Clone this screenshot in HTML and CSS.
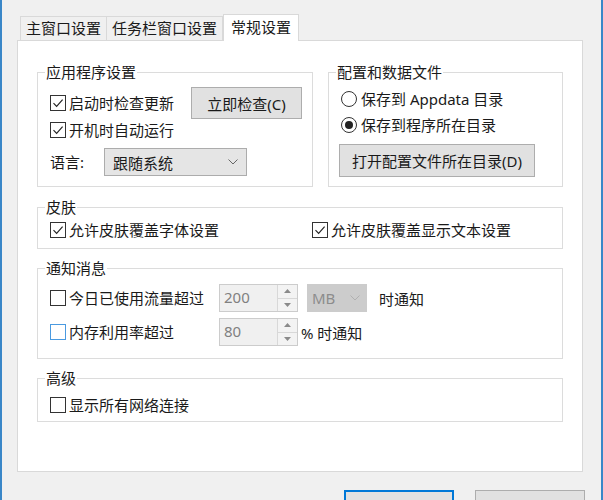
FILE: index.html
```html
<!DOCTYPE html>
<html lang="zh">
<head>
<meta charset="utf-8">
<title>常规设置</title>
<link rel="stylesheet" href="styles.css">
</head>
<body>
<div class="window">
  <div class="tabs">
    <div class="tab">主窗口设置</div>
    <div class="tab">任务栏窗口设置</div>
    <div class="tab active">常规设置</div>
  </div>
  <div class="pane">
    <div class="top-row">
      <fieldset class="group app">
        <legend>应用程序设置</legend>
        <div class="body app-body">
          <label class="chk"><span class="box"><svg viewBox="0 0 14 14"><path d="M2.5 7.2 L5.6 10.3 L11.6 3.6"/></svg></span>启动时检查更新</label>
          <button class="btn check-btn">立即检查(C)</button>
          <label class="chk row2"><span class="box"><svg viewBox="0 0 14 14"><path d="M2.5 7.2 L5.6 10.3 L11.6 3.6"/></svg></span>开机时自动运行</label>
          <span class="lang-label">语言:</span>
          <div class="select lang-select"><span>跟随系统</span><svg class="chev" viewBox="0 0 10 6"><path d="M0.5 0.5 L5 5 L9.5 0.5"/></svg></div>
        </div>
      </fieldset>
      <fieldset class="group cfg">
        <legend>配置和数据文件</legend>
        <div class="body cfg-body">
          <label class="radio"><span class="circle"></span>保存到 Appdata 目录</label>
          <label class="radio"><span class="circle on"><span class="dot"></span></span>保存到程序所在目录</label>
          <button class="btn open-btn">打开配置文件所在目录(D)</button>
        </div>
      </fieldset>
    </div>

    <fieldset class="group skin">
      <legend>皮肤</legend>
      <div class="body skin-body">
        <label class="chk"><span class="box"><svg viewBox="0 0 14 14"><path d="M2.5 7.2 L5.6 10.3 L11.6 3.6"/></svg></span>允许皮肤覆盖字体设置</label>
        <label class="chk"><span class="box"><svg viewBox="0 0 14 14"><path d="M2.5 7.2 L5.6 10.3 L11.6 3.6"/></svg></span>允许皮肤覆盖显示文本设置</label>
      </div>
    </fieldset>

    <fieldset class="group notify">
      <legend>通知消息</legend>
      <div class="body notify-body">
        <label class="chk"><span class="box"></span>今日已使用流量超过</label>
        <div class="spin"><span class="spin-val">200</span><span class="spin-btns"><span class="sb"><svg viewBox="0 0 7 4"><path d="M0 4 L3.5 0 L7 4Z"/></svg></span><span class="sb"><svg viewBox="0 0 7 4"><path d="M0 0 L3.5 4 L7 0Z"/></svg></span></span></div>
        <div class="tail"><div class="select unit"><span>MB</span><svg class="chev" viewBox="0 0 10 6"><path d="M0.5 0.5 L5 5 L9.5 0.5"/></svg></div><span class="when">时通知</span></div>
        <label class="chk"><span class="box hover"></span>内存利用率超过</label>
        <div class="spin"><span class="spin-val">80</span><span class="spin-btns"><span class="sb"><svg viewBox="0 0 7 4"><path d="M0 4 L3.5 0 L7 4Z"/></svg></span><span class="sb"><svg viewBox="0 0 7 4"><path d="M0 0 L3.5 4 L7 0Z"/></svg></span></span></div>
        <div class="tail"><span class="pct">% 时通知</span></div>
      </div>
    </fieldset>

    <fieldset class="group adv">
      <legend>高级</legend>
      <div class="body adv-body">
        <label class="chk"><span class="box"></span>显示所有网络连接</label>
      </div>
    </fieldset>
  </div>
  <div class="footer">
    <button class="btn ok">确定</button>
    <button class="btn cancel">取消</button>
  </div>
</div>
</body>
</html>
```

FILE: styles.css
```css
* { box-sizing: border-box; }
html, body { margin: 0; padding: 0; }
body {
  background: #f0f0f0;
  font-family: "Segoe UI", "Noto Sans", "Noto Sans CJK SC", sans-serif;
  font-size: 15px;
  color: #1a1a1a;
}
.window {
  height: 500px;
  overflow: hidden;
  border-left: 2px solid #3a87c8;
  border-right: 2px solid #3a87c8;
  padding: 14px 18px 0 15px;
  display: flex;
  flex-direction: column;
}
.tabs {
  display: flex;
  align-items: flex-end;
  height: 26px;
  padding-left: 3px;
}
.tab {
  height: 24px;
  line-height: 22px;
  padding: 0 5px;
  border: 1px solid #d9d9d9;
  border-bottom: none;
  background: #f0f0f0;
  white-space: nowrap;
}
.tab + .tab { border-left: none; }
.tab.active {
  height: 27px;
  margin-bottom: -1px;
  line-height: 25px;
  padding: 0 7px;
  background: #fff;
  border-left: 1px solid #d9d9d9;
  position: relative;
  z-index: 1;
}
.pane {
  height: 432px;
  flex: none;
  background: #fff;
  border: 1px solid #d9d9d9;
  padding: 23px 19px 0 19px;
}
.top-row {
  display: flex;
  gap: 15px;
}
fieldset.group {
  margin: 0;
  padding: 0;
  min-width: 0;
  border: 1px solid #dcdcdc;
}
fieldset.group legend {
  padding: 0 1px;
  margin-left: 7px;
  line-height: 16px;
  height: 16px;
}
fieldset.app { width: 276px; flex: none; }
fieldset.cfg { flex: 1; }
fieldset.skin { margin-top: 12px; }
fieldset.notify { margin-top: 11px; }
fieldset.adv { margin-top: 11px; }

.chk, .radio {
  display: flex;
  align-items: center;
  white-space: nowrap;
  line-height: 20px;
}
.box {
  width: 16px;
  height: 16px;
  border: 1px solid #333;
  background: #fff;
  margin-right: 3px;
  flex: none;
  display: flex;
}
.box.hover { border-color: #4a9ae0; }
.box svg { width: 14px; height: 14px; }
.box path { fill: none; stroke: #222; stroke-width: 1.15; }
.circle {
  width: 16px;
  height: 16px;
  border: 1px solid #333;
  border-radius: 50%;
  background: #fff;
  margin-right: 4px;
  flex: none;
  display: flex;
  align-items: center;
  justify-content: center;
}
.dot {
  width: 8px;
  height: 8px;
  border-radius: 50%;
  background: #222;
}

.btn {
  font: inherit;
  color: #1a1a1a;
  background: #e1e1e1;
  border: 1px solid #adadad;
  padding: 0;
  white-space: nowrap;
}
.select {
  display: flex;
  align-items: center;
  justify-content: space-between;
  background: #e5e5e5;
  border: 1px solid #acacac;
  padding: 0 8px 0 8px;
}
.chev { width: 10px; height: 6px; }
.chev path { fill: none; stroke: #666; stroke-width: 1; }

/* app group */
.app-body {
  display: grid;
  grid-template-columns: 141px 111px;
  grid-template-rows: 32px 22px 35px;
  padding: 7px 0 10px 12px;
  align-items: center;
}
.check-btn { height: 32px; width: 111px; }
.row2 { grid-column: 1 / 3; }
.lang-label { line-height: 28px; align-self: end; }
.lang-select {
  margin-left: -87px;
  width: 143px;
  height: 28px;
  align-self: end;
}

/* cfg group */
.cfg-body {
  display: flex;
  flex-direction: column;
  align-items: flex-start;
  padding: 6px 0 9px 12px;
}
.cfg-body .radio { height: 26px; }
.open-btn {
  margin-top: 6px;
  margin-left: -2px;
  height: 33px;
  width: 196px;
}

/* skin */
.skin-body {
  display: grid;
  grid-template-columns: 262px auto;
  padding: 5px 0 8px 12px;
}
.skin-body .chk { height: 20px; }

/* notify */
.notify-body {
  display: grid;
  grid-template-columns: 169px 79px auto;
  grid-template-rows: 28px 28px;
  row-gap: 6px;
  align-items: center;
  padding: 8px 0 12px 12px;
}
.notify-body .chk { height: 28px; }
.spin {
  height: 28px;
  display: flex;
  background: #f0f0f0;
  border: 1px solid #cccccc;
}
.spin-val {
  flex: 1;
  color: #808080;
  line-height: 24px;
  padding-left: 4px;
}
.spin-btns {
  width: 20px;
  display: flex;
  flex-direction: column;
  border-left: 1px solid #d8d8d8;
}
.sb {
  flex: 1;
  display: flex;
  align-items: center;
  justify-content: center;
  background: #f3f3f3;
}
.sb + .sb { border-top: 1px solid #d8d8d8; }
.sb svg { width: 7px; height: 4px; }
.sb path { fill: #8a8a8a; }
.tail { display: flex; align-items: center; }
.unit {
  margin-left: 9px;
  width: 60px;
  height: 28px;
  background: #cccccc;
  border-color: #cccccc;
  color: #8c8c8c;
  padding: 0 6px 0 4px;
}
.unit .chev path { stroke: #b0b0b0; }
.when { margin-left: 12px; }
.pct { margin-left: 3px; }

/* advanced */
.adv-body { padding: 9px 0 6px 12px; }
.adv-body .chk { height: 20px; }

/* footer */
.footer {
  display: flex;
  justify-content: flex-end;
  gap: 21px;
  padding-top: 18px;
  margin-right: -2px;
}
.footer .btn { width: 110px; height: 32px; flex: none; }
.footer .ok { border: 2px solid #0078d7; }
```
